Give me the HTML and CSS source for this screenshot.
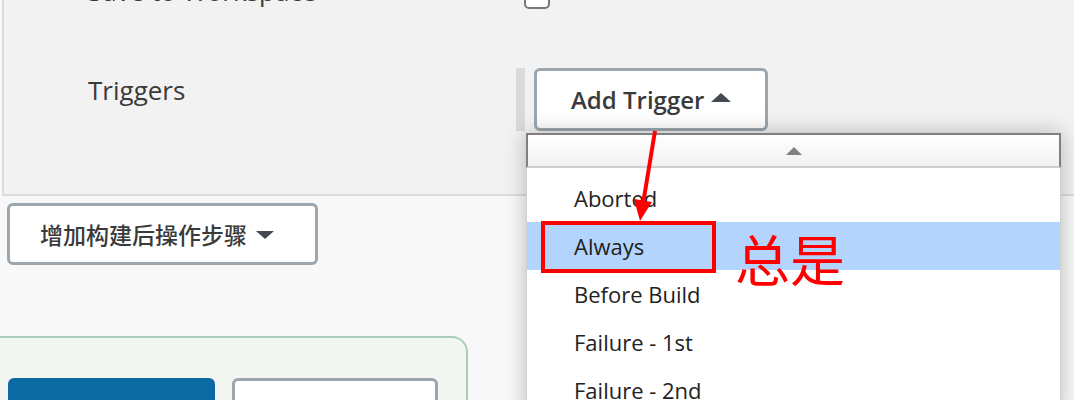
FILE: index.html
```html
<!DOCTYPE html>
<html lang="zh">
<head>
  <meta charset="UTF-8" />
  <title>Post-build Actions</title>
  <link rel="stylesheet" href="styles.css">
</head>
<body>
  <div class="page">
    <section class="panel">
      <div class="row row-save">
        <label class="row-label">Save to Workspace</label>
        <div class="row-control">
          <span class="checkbox"></span>
        </div>
      </div>
      <div class="row row-triggers">
        <label class="row-label">Triggers</label>
        <div class="row-control chunk">
          <button class="btn btn-trigger">Add Trigger <span class="caret caret-up"></span></button>
        </div>
      </div>
    </section>

    <button class="btn btn-step">增加构建后操作步骤 <span class="caret caret-down"></span></button>

    <div class="bottom-bar">
      <button class="btn-save"></button>
      <button class="btn btn-apply"></button>
    </div>
  </div>

  <!-- menu ouvert sous "Add Trigger" -->
  <div class="menu">
    <div class="menu-scroll"><span class="caret caret-scroll"></span></div>
    <ul class="menu-list">
      <li>Aborted</li>
      <li class="active">Always</li>
      <li>Before Build</li>
      <li>Failure - 1st</li>
      <li>Failure - 2nd</li>
    </ul>
  </div>

  <!-- annotations rouges -->
  <svg class="marks" width="1074" height="400" viewBox="0 0 1074 400">
    <line x1="655" y1="131" x2="643" y2="204" stroke="#ff0000" stroke-width="4"/>
    <polygon points="640,221 652,202 634,199" fill="#ff0000"/>
    <rect x="543" y="223" width="171" height="48" fill="none" stroke="#ff0000" stroke-width="4"/>
  </svg>
  <div class="mark-text">总是</div>
</body>
</html>
```

FILE: styles.css
```css
body {
  margin: 0;
  background-color: #f8f8f8;
  font-family: 'Open Sans', 'Noto Sans CJK SC', sans-serif;
  color: #333;
  overflow: hidden;
}

.page {
  margin-top: -27px;
}

.panel {
  margin-left: 2px;
  border-left: 2px solid #dcdcdc;
  border-bottom: 2px solid #dcdcdc;
  background-color: #f2f2f2;
  padding: 0 0 63px 84px;
}

.row {
  display: grid;
  grid-template-columns: 428px 1fr;
  align-items: start;
}

.row-label {
  font-size: 26px;
  line-height: 36px;
  color: #3a3a3a;
}

.row-save .checkbox {
  display: block;
  width: 22px;
  height: 22px;
  margin: 10px 0 0 8px;
  border: 2px solid #777;
  border-radius: 5px;
  background-color: #fff;
}

.row-triggers {
  margin-top: 59px;
}

.row-triggers .row-label {
  padding-top: 4px;
}

.chunk {
  border-left: 9px solid #dadada;
  padding-left: 9px;
}

.btn {
  display: flex;
  align-items: center;
  background-color: #fff;
  border: 3px solid #9ba6ae;
  border-radius: 6px;
  color: #3a3a3a;
  font-family: 'Open Sans', 'Noto Sans CJK SC', sans-serif;
  font-weight: 600;
  cursor: pointer;
}

.btn-trigger {
  width: 234px;
  height: 63px;
  padding: 0 0 0 34px;
  font-size: 24px;
  gap: 7px;
}

.caret {
  display: inline-block;
  width: 0;
  height: 0;
  border-left: 10px solid transparent;
  border-right: 10px solid transparent;
}

.caret-up {
  border-bottom: 9px solid #454a50;
  margin-top: -4px;
}

.caret-down {
  border-left-width: 9px;
  border-right-width: 9px;
  border-top: 8px solid #454a50;
  margin-top: 2px;
}

.btn-step {
  margin: 7px 0 0 7px;
  width: 311px;
  height: 62px;
  padding: 0 0 0 30px;
  font-family: 'Noto Sans CJK SC', sans-serif;
  font-size: 23px;
  font-weight: 500;
  gap: 9px;
}

.bottom-bar {
  margin-top: 71px;
  width: 458px;
  height: 80px;
  padding: 40px 0 0 8px;
  background-color: #f4f7f1;
  border-top: 2px solid #aacfb9;
  border-right: 2px solid #aacfb9;
  border-top-right-radius: 16px;
  display: flex;
  gap: 17px;
}

.btn-save {
  width: 207px;
  height: 60px;
  border: none;
  border-radius: 6px;
  background-color: #0b6aa2;
}

.btn-apply {
  width: 206px;
  height: 60px;
}

.menu {
  position: absolute;
  top: 133px;
  left: 526px;
  width: 535px;
  box-shadow: 0 0 20px rgba(0, 0, 0, 0.25);
  background-color: #fff;
}

.menu-scroll {
  height: 31px;
  border: 2px solid #808080;
  border-bottom: 2px solid #cfcfcf;
  background: linear-gradient(#fff, #f1f1f1);
  display: flex;
  justify-content: center;
  align-items: center;
}

.caret-scroll {
  border-left-width: 8px;
  border-right-width: 8px;
  border-bottom: 8px solid #808080;
}

.menu-list {
  list-style: none;
  margin: 0;
  padding: 6px 0 0;
  border-left: 1px solid #d0d0d0;
  border-right: 1px solid #d0d0d0;
}

.menu-list li {
  height: 48px;
  line-height: 48px;
  padding-left: 47px;
  font-size: 22px;
  color: #222;
}

.menu-list li.active {
  background-color: #b3d4fc;
}

.marks {
  position: absolute;
  top: 0;
  left: 0;
}

.mark-text {
  position: absolute;
  top: 225px;
  left: 735px;
  font-family: 'Noto Sans CJK SC', sans-serif;
  font-size: 55px;
  line-height: 64px;
  color: #ff0000;
}
```
